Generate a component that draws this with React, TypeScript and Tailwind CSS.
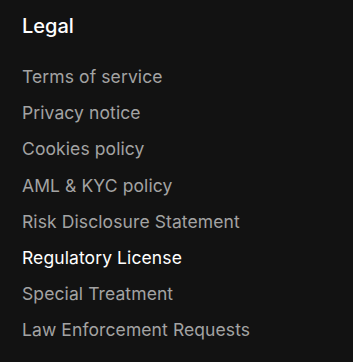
const links = [
  { label: 'Terms of service' },
  { label: 'Privacy notice' },
  { label: 'Cookies policy' },
  { label: 'AML & KYC policy' },
  { label: 'Risk Disclosure Statement' },
  { label: 'Regulatory License', active: true },
  { label: 'Special Treatment' },
  { label: 'Law Enforcement Requests' },
];

export default function App() {
  return (
    <div
      className="min-h-screen bg-[#121212] px-[22px] pt-[12px]"
      style={{ fontFamily: 'Inter, "Noto Sans", sans-serif' }}
    >
      <h3 className="text-[20px] font-medium leading-[28px] text-white">Legal</h3>
      <ul className="mt-[23px] flex flex-col">
        {links.map((l) => (
          <li key={l.label} className="h-[36.2px] leading-[28px]">
            <a
              href="#"
              className={
                'text-[17.5px] tracking-[0.1px] ' +
                (l.active ? 'text-white' : 'text-[#a3a3a3] hover:text-white')
              }
            >
              {l.label}
            </a>
          </li>
        ))}
      </ul>
    </div>
  );
}
